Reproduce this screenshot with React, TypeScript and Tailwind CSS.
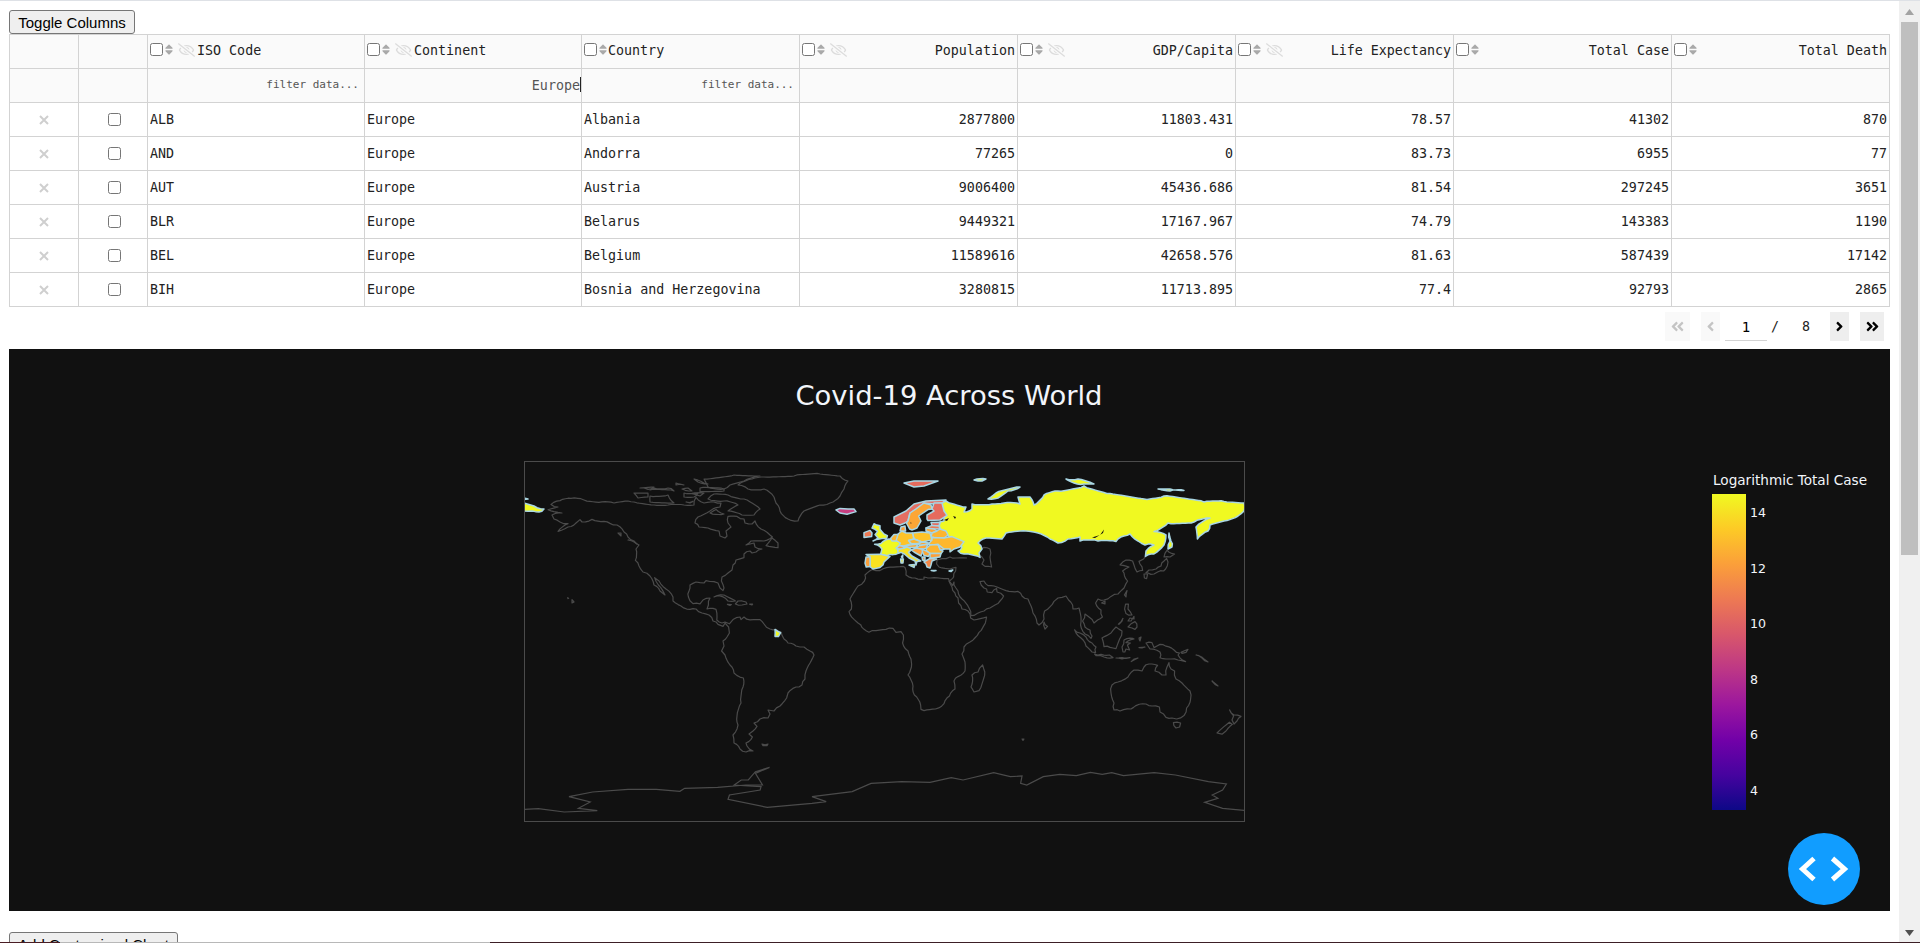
import { FaSort, FaRegEyeSlash, FaAngleDoubleLeft, FaAngleDoubleRight, FaAngleLeft, FaAngleRight } from 'react-icons/fa'

type Columna = { nombre: string; ojo: boolean; numero: boolean }

const columnas: Columna[] = [
  { nombre: 'ISO Code', ojo: true, numero: false },
  { nombre: 'Continent', ojo: true, numero: false },
  { nombre: 'Country', ojo: false, numero: false },
  { nombre: 'Population', ojo: true, numero: true },
  { nombre: 'GDP/Capita', ojo: true, numero: true },
  { nombre: 'Life Expectancy', ojo: true, numero: true },
  { nombre: 'Total Case', ojo: false, numero: true },
  { nombre: 'Total Death', ojo: false, numero: true },
]

const filas = [
  ['ALB', 'Europe', 'Albania', '2877800', '11803.431', '78.57', '41302', '870'],
  ['AND', 'Europe', 'Andorra', '77265', '0', '83.73', '6955', '77'],
  ['AUT', 'Europe', 'Austria', '9006400', '45436.686', '81.54', '297245', '3651'],
  ['BLR', 'Europe', 'Belarus', '9449321', '17167.967', '74.79', '143383', '1190'],
  ['BEL', 'Europe', 'Belgium', '11589616', '42658.576', '81.63', '587439', '17142'],
  ['BIH', 'Europe', 'Bosnia and Herzegovina', '3280815', '11713.895', '77.4', '92793', '2865'],
]

const aPares = (s: string) => s.trim().split(/\s+/).map(p => p.split(',').map(Number))

// lon,lat -> plot pixels (the map frame is 720x360, 2px per degree)
const pt = (s: string) =>
  aPares(s).map(([lon, lat]) => `${515 + (lon + 180) * 2},${112 + (90 - lat) * 2}`).join(' ')

// long straight edges look wrong on a coast, so break them up a little
const rugoso = (s: string, cerrado = true) => {
  const ps = aPares(s)
  const out: string[] = []
  const total = cerrado ? ps.length : ps.length - 1
  for (let i = 0; i < total; i++) {
    const [x0, y0] = ps[i]
    const [x1, y1] = ps[(i + 1) % ps.length]
    const d = Math.hypot(x1 - x0, y1 - y0)
    const n = Math.max(1, Math.floor(d / 1.4))
    for (let k = 0; k < n; k++) {
      const t = k / n
      const r = k === 0 ? 0 : Math.sin(x0 * 12.9898 + y0 * 78.233 + k * 37.7) * 0.45
      out.push(`${x0 + (x1 - x0) * t - ((y1 - y0) / d) * r},${y0 + (y1 - y0) * t + ((x1 - x0) / d) * r}`)
    }
  }
  if (!cerrado) out.push(ps[ps.length - 1].join(','))
  return out.join(' ')
}

// antarctica was read off a zoomed crop, so it has its own mapping
const antartida = '31,508 60,506 115,516 185,512 145,505 170,486 125,470 175,456 250,448 310,448 360,454 370,445 440,442 500,435 535,435 520,400 550,382 520,395 505,420 490,420 475,435 505,438 532,440 530,450 465,465 462,478 545,502 640,490 670,485 640,470 725,455 765,430 830,425 890,427 935,413 960,420 1025,398 1060,410 1085,408 1082,430 1095,435 1130,410 1165,403 1200,407 1230,397 1255,403 1275,398 1300,407 1365,398 1410,405 1480,425 1518,432 1510,450 1488,465 1500,475 1472,487 1510,505 1556,511'
  .split(' ').map(p => {
    const [x, y] = p.split(',').map(Number)
    return `${510 + x / 2.119 - 9},${640 + y / 3 - 349}`
  }).join(' ')

// asia up to the russian border, open line
const asia = '41.5,41.5 36,41.5 33,42 29,41.2 26.5,40.5 26.3,38.5 27.5,37 30.5,36.3 33,36 36,36.8 35.8,35 34.8,32 34.3,31.3 32.6,29.9 34.3,27.8 35,29.5 35,28 37,25 39,21 42.5,16.5 43.4,12.7 45,12.8 50,15 53,16.5 55.5,18 58,20 59.8,22.5 56.5,24.5 56.3,26.3 54,24.2 51.6,24.5 51.3,26 50,26.5 48,29.7 50,30 52,27.7 56.5,27 61,25.2 67,24.8 69,22.5 72,21 72.8,19 74.5,14 76.5,9 77.5,8 80,11 80.3,15 85,19.8 87,21.5 91,22.5 92.3,20.5 94.3,18 94.5,16 97.5,16.5 98.5,12 98.3,8 100.5,3.5 103.5,1.3 104,2.5 103,5.5 100.5,7 99.3,10 100.5,13.5 102.5,12 105,9 106.8,10.5 109.2,12 108.5,15.5 105.8,19 107,21 110,20.5 113.5,22.3 117,23.5 120,26.5 121.8,30 120,34 119.3,35 122.5,37 118,38 121,40.5 124.3,40 125,38 126.5,34.5 129.3,35.3 128,38.5 127.5,39.8 129.8,41 130.7,42.3'

const costas = [
  // americas
  '-156.5,71.3 -150,70.5 -141,69.6 -135,69 -128,70 -125,69.5 -115,68 -108,68 -100,68 -95,68 -94,71.8 -90,69 -85,69.5 -81.5,69 -82,67 -87,65 -93,62 -94.5,59 -92.5,57 -88,56.5 -82.5,55 -82,52.5 -79.5,51.5 -78.5,52.5 -79,55 -76.5,57 -78,59 -78,62.3 -73.5,62.3 -70,61 -69.5,59 -66,58.5 -64.5,60 -61.5,56 -57,53 -55.8,52 -60,50 -66.5,50 -69,48 -65,49 -64.5,47 -61,46 -64,44.5 -66,44 -67,45 -70,43.5 -70,41.7 -74,40.5 -75.5,38 -76,35.5 -78,34 -81,32 -81.3,30 -80,26.5 -80.5,25.2 -82,26.5 -83,29 -85,29.7 -89,30.2 -90,29 -94,29.5 -97,28 -97.5,25 -97.8,22 -95.5,18.7 -92,18.6 -90.5,20.5 -87,21.5 -87.8,18 -88.5,16 -84,15.8 -83.5,12 -83.6,10.5 -81,9 -79.5,9.5 -77.3,8.6 -75.5,10.7 -72,12 -71.5,10.7 -70,12 -67,10.6 -62,10.7 -60,8.5 -57,6 -54,5.8 -51.5,4.5 -50,1 -48,-1 -44,-2.5 -40,-3 -37,-5 -35,-7 -37,-11 -39,-15 -39.5,-19 -41,-22 -44,-23 -48,-26 -48.7,-28.5 -52,-32.5 -55,-35 -58,-34.5 -57,-36.5 -58,-38.5 -62,-39 -65,-41 -63.5,-42.7 -65.5,-45 -67.5,-46.5 -65.8,-48 -69,-51 -68.5,-52.5 -65.5,-55 -69,-55.5 -72,-54 -75,-51 -75.5,-47 -73,-42 -73.5,-37.5 -71.5,-31 -70.5,-23 -70.3,-18.5 -75,-16 -77,-12 -79.5,-7 -81.2,-5 -80,-2.5 -80.5,0 -78.5,2 -77.3,4 -77.7,7 -79.5,8.9 -80.5,7.3 -83,8.3 -85.5,10 -87.5,13 -91,14 -94,16 -97,15.8 -101.5,17.5 -105.5,20 -105.5,22 -109,26 -112.5,30 -114.7,31.7 -112.8,28 -110,24 -109.5,23 -112,25 -115,28 -117,32.5 -120.5,34.5 -122.5,37.5 -124.3,40.3 -124,46 -122.5,48 -125,50 -128,52 -130,54.5 -133.5,58 -137,58.8 -140,59.8 -146,60.8 -151,59.5 -152,60.7 -154,59 -158,57 -163,54.8 -158,58.7 -162,59.5 -165,61 -166,63 -161,64 -165,64.7 -168,65.6 -163,67 -166.5,68.3 -162,70.2',
  // greenland and the canadian islands
  '-73,78 -66,81 -60,82 -45,82.5 -32,83.5 -22,82.5 -18,80 -20,76 -22,72.5 -27,69 -32,68 -40,65 -43,60 -48,61 -52,65 -54,69 -55,72 -60,76 -68,76',
  '-62,66 -65,63 -71,63 -78,65 -73,68 -80,70 -88,71 -85,73.5 -78,73 -70,71',
  '-62,82.5 -75,83 -90,81 -88,77 -80,76 -77,78 -70,80',
  '-105,69 -117,69.5 -117,72.5 -108,73',
  '-123,71.5 -125,74 -118,74 -118,72',
  '-80,75 -92,74.8 -92,76.5 -80,76',
  '-105,75 -117,75.5 -115,76.5 -108,76.5',
  '-95,72 -100,72 -100,74 -93,74',
  '-90,79 -95,81 -93,79.5 -88,78.5',
  '-92,72.5 -96,73.8 -90,74',
  '-96,75 -101,76 -98,76.5',
  '-115,77 -122,76.5 -118,75.8',
  '-100,78 -104,79 -104,78',
  '-97,69 -99,69.5 -95.5,69.8',
  '-80,63.5 -87,64 -84,65.8',
  '-59,47.7 -53,46.7 -53,49 -56,51.5',
  '-128,50.5 -123.5,48.5 -125,49.5',
  '-133,54 -131.5,54 -131.5,52.5',
  '-85,22 -80,23 -75,20.5 -74.3,20 -78,20 -82,22.5',
  '-74.3,18.5 -73,20 -69,19.5 -68.5,18.5 -71,18',
  '-78.3,18.3 -76.3,18.2 -77,17.8',
  '-67.2,18.4 -65.7,18.4 -66,18',
  '-156,19 -155,19.5 -156,20.7',
  '-158.2,21.6 -157.7,21.4 -158,21.2',
  '-61,-51.5 -58,-51.5 -58.5,-52.3 -60.5,-52.3',
  // africa
  '-5.9,35.8 -9.5,33 -9.8,30 -13,27.5 -17,21 -16.3,16 -17.5,14.7 -15,10.8 -13,9 -11,6.8 -7.5,4.4 -4,5.2 1,5.8 4.5,6.3 6,4.3 8.5,4.7 9.7,3 9.3,-1 12,-5 13.5,-9 13.8,-11.5 12,-17 14.5,-22.5 15.2,-27 18.3,-32 18.5,-34.2 20,-34.8 25.7,-34 30,-31.3 32.7,-27.5 35.5,-24 35,-20 37,-17.8 40.5,-15 40.5,-10.5 39,-6.5 40,-3 43,-0.5 47.5,4.3 51,10.5 51.3,12 45,10.5 43.3,11.5 42,15 39,16 37.3,19 37,21.5 35.5,24 34,27 32.6,29.8 32.3,31.2 30,31.2 25,31.7 20,32 20,31 15.5,31.5 11,33 10.5,36.8 9.7,37.3 3,36.9 -2,35.2',
  '49.3,-12 50.4,-15.5 47.5,-24.8 45,-25.5 43.5,-23 44.3,-20 44,-17 47,-15.5',
  '47,45 50,46.8 53,46 53,42 53.8,37 50.5,37.3 49,38.5 50,40.5 47.5,43',
  '130.9,34 132.5,35.5 136,36 138.5,37.5 140,40 141.3,41.3 142,39.5 140.8,36 139.8,35 136.8,34.5 135,33.5 132,34',
  '130,33.5 131.8,33.5 131.3,31.2 130.2,31.5',
  '140,42 141.5,45.4 145.3,43.5 143,42',
  '120.2,23 121.5,25.2 121,22',
  '108.8,19 110.5,20 110.5,18.5',
  '80,9.5 81.8,7.3 80.5,6 79.8,8',
  '120.3,16 120.8,18.5 122.2,18.4 122,16 124,13 121,13.7',
  '122,7 123.5,8.6 125.5,9.7 126.5,7 125.5,5.8 124,6.5',
  '117.2,8.4 119.5,11.3 119,10 117.6,8.4',
  '122,10 123,11.5 125,11 125,12.3 123.5,10',
  '109,1.5 111.5,2.8 113.5,4 116,7 119,5 117.8,1 116,-3.8 113,-3.2 110,-2.8',
  '95.3,5.6 98,4 101,2 104,-1 106,-3 105.8,-5.8 104,-5.5 101,-2.5 98.5,1.5',
  '105.3,-6.5 108.5,-6.7 112.7,-7 114.5,-8.3 110,-8 106,-7.3',
  '119.5,-5.5 119,-3 120,0.5 124.5,1.3 125,1 121,-0.8 123.2,-1 121.7,-2 122.8,-4.5 121,-4 120.4,-5.5',
  '116,-8.5 119,-8.3 123,-8.3 119,-9',
  '123.6,-10.3 127,-8.5 125,-9.5',
  '127.5,1.5 128.5,2 128,0 127.7,0.5',
  '127.5,-3.3 130.5,-3 129,-3.5',
  '131,-1 134,-0.8 135,-3.3 138,-1.7 141,-2.6 145,-4.5 147.8,-6 147,-7 150.8,-10.3 147,-9.5 143.5,-9 141,-9 138,-8.4 138,-5.5 133,-4 132,-2.5',
  '148.5,-5.7 152,-4.2 151,-5.7 149,-6.2',
  '156,-7 160,-9 162,-10.5 159,-8.5',
  // oceania
  '114,-22 113.5,-26 115,-31 115,-34.5 118,-35 123.5,-34 126,-32.3 131,-31.5 134,-32.5 137.7,-33 138,-35.5 141,-38.2 144,-38.5 146.3,-39 150,-37.3 151.3,-33.5 153.3,-29 153,-25 149,-21 146,-19 145.3,-15 143.5,-14 142.5,-10.8 141.5,-13 141,-17 139,-17 135.5,-15 136.8,-12.2 132.5,-11.5 130,-13 129,-15 125,-14.5 122,-18 117,-20.5',
  '144.7,-40.8 148.3,-41 147.8,-43 146,-43.5',
  '172.8,-34.5 175,-37 178.5,-37.7 176.5,-40 175,-41.5 174,-39.5 174.8,-37.5',
  '172.7,-40.6 174.2,-41.7 171,-45 169,-46.6 166.5,-46 171,-42',
  '164,-20 167,-22.5 165.5,-21.7',
  '69,-49 70,-49 69.5,-49.7',
]

// europe and russia with their value on the plasma scale
const paises: [string, string][] = [
  ['#f0f921', '31,70 41,67 40,64.5 44,66 44,68.5 54,68.5 60,69 68,68.5 67,72 73,72 75,68 80,73 87,75 100,77.5 113,73.8 130,71 140,72.5 160,69.5 170,69.8 180,69 180,65 177,62.5 170,60 163,58 162,55 156.7,51 156,57 163,61.5 155,59.5 142,59 135,54.7 141,53 140,48 135,43.5 130.7,42.3 131,45 135,48 130.5,48 127,50 123,53.5 120,52.5 116,49.8 107,50 98,50 98,52 92,51 87,49 83,51 77,54 71,55 61,54 59,51 51,51.5 47,49 49,46 47.5,44 48,41.8 40,43.5 37,45 39,47 35,50 32,52.5 28,56 28,59.5 30,60 30,62 30,65 29,69'],
  ['#f0f921', '-180,69 -175,67.5 -170,66 -172.5,64.5 -176,65 -180,65'],
  ['#f0f921', '-180,71.5 -178,71 -180,70.8'],
  ['#f0f921', '52,71 56,74 68,77 62,75 57,71.5'],
  ['#f0f921', '91,81 97,81 105,78.5 100,78.5 95,79'],
  ['#f0f921', '137,76 143,76 150,75.3 143,75'],
  ['#f0f921', '45,80.5 51,81 49,80'],
  ['#f0f921', '142,46 143,50 142.5,54 143.5,50 144,47'],
  ['#e56b5d', '10,79 15,80 27,80 20,77.5 15,77'],
  ['#e56f62', '5,59 5,62 11,65 15,68.5 21,70 31,70.5 29,69 25,68.5 20,69 16,66 13,64 12,60 10.5,59 8,58'],
  ['#fca636', '11.2,59 12.8,56 14,55.5 16.5,56.5 18.5,60 17.3,62.5 22,65.7 24,66 23.5,68 20,69 16,66 13,64 12,60'],
  ['#e56b5d', '22,60.2 28,60.5 31.5,62.8 30,65 29,69 25,69 24,66 25,65 21.5,63 21.5,61'],
  ['#e56b5d', '23.5,59.2 28,59.4 27.5,57.5 24,57.8'],
  ['#ed7953', '21,56.5 24,57.8 27.5,57.5 28,56 25,56'],
  ['#fca636', '21,56.5 25,56 26.5,55 24,54 21,55'],
  ['#fdb42f', '23.5,52 24,54 26.5,55 28,56 31,55 32,53 30,51.5 25,51.7'],
  ['#fdc328', '14.2,54 19,54.5 23,54 24,50.5 19,49.5 15,51'],
  ['#feb72d', '24,50.5 24,51.7 30,51.5 34,52.2 40,49.7 38,47 35,46 33,44.6 33,46 30,46 28.2,45.5 27,48.3 23,48 22.2,48.5'],
  ['#fdc328', '6,51 7,53.5 9,55 11,54 14.2,54 15,51 12.3,50.3 13.7,48.6 10,47.5 7.6,47.7 8,49 6,49.5'],
  ['#f0f921', '-4.7,48.4 -1.5,48.7 2.5,51 8,49 7.5,47.5 6.5,46.5 7.5,44 3,43.3 1.5,42.6 -1.7,43.4 -1,46'],
  ['#f0f921', '8.7,42 9.4,43 9.3,41.5'],
  ['#f9e221', '-9,43.3 -1.7,43.4 3,42.3 0,39.5 -0.5,38 -2,36.8 -5.5,36 -7,37.2 -7,42'],
  ['#fb9f3a', '-9,42 -7,42 -7,37.2 -8.9,37 -9.5,39'],
  ['#f0f921', '-5.5,50 1.3,51.2 1.7,52.7 0,53.5 -1.5,55.2 -2,56 -2,57.6 -5,58.6 -6,56.5 -3.2,54.8 -4.5,53.2 -3,51.5'],
  ['#ed7953', '-10,51.8 -6.2,52.2 -6,54 -7,55.3 -10,54.2'],
  ['#c73f80', '-24,65.5 -22,64 -18.5,63.4 -14,64.7 -15,66 -18,66 -22,66.3'],
  ['#f7e225', '7,44 7,46 12,47 13.7,45.7 12.3,44.3 14,42.5 18.4,40 16.5,39.8 16,38 15.5,40 12.5,41.5 10.2,43.5 8.5,44.3'],
  ['#f7e225', '12.5,38 15.5,38.2 15,36.8'],
  ['#f7e225', '8.3,41 9.7,41 9.5,39 8.5,39'],
  ['#fb9f3a', '8,55 8.5,57 10.5,57.5 10.8,55'],
  ['#fdb42f', '3.3,51.3 5,53.3 7,53.3 6,50 4,50'],
  ['#fb9f3a', '6,46.3 7.5,47.7 9.7,47.3 10.3,46.5 8,46'],
  ['#fca636', '9.7,47.3 13,48 17,48.5 16,46.8 12.5,46.7'],
  ['#fdb42f', '12.3,50.3 15,51 18.8,49.5 17,48.7 13.7,48.6'],
  ['#fca636', '17,48.5 19,49.5 22.5,49 22,48.4 18,47.8'],
  ['#fca636', '16,46.8 18,47.8 22,48.4 21,46.2 18,45.8'],
  ['#fdb42f', '21,46.2 23,48 27,48.2 28.2,45.5 29.5,45 28.5,43.7 23,43.8 21.5,44.8'],
  ['#fb9f3a', '27,48.3 30,46 28.2,45.5'],
  ['#fb9f3a', '23,43.8 28.5,43.7 28,42 23,41.4'],
  ['#fca636', '19,46 21.5,44.8 23,43.8 22.3,42.3 20,42.8 19.2,44.5'],
  ['#fb9f3a', '13.6,45.5 16,46.5 19,45.9 19.2,44.5 18.5,42.5 15,44.5'],
  ['#f89540', '19,42 20.5,42 20.5,40 19.3,40.5'],
  ['#f48849', '20,39.5 23,41.3 26.3,41 24,40 23.5,38 23,36.5 21.5,37 21,38.5'],
  ['#add8e6', '23.6,35.3 26,35.2 25,35'],
  ['#add8e6', '32.5,35 34.4,35.5 33.5,34.7'],
  ['#f0f921', '-54.5,5.8 -51.7,4.2 -52.8,2.2 -54.5,2.3'],
]

const lagos = ['30,60.5 32.5,61.5 31.5,60', '34.5,62.5 36,62 35.5,61', '13,59.3 14,59 13.3,58.7', '104,51.7 108,53 110,55.7 109.5,54 105.5,51.5']

const plasma = ['#f0f921', '#fdca26', '#fb9f3a', '#ed7953', '#d8576b', '#bd3786', '#9c179e', '#7201a8', '#46039f', '#0d0887']
const ticks: [string, number][] = [['14', 168], ['12', 224], ['10', 279], ['8', 335], ['6', 390], ['4', 446]]

function Encabezado({ col }: { col: Columna }) {
  return (
    <div className={`flex items-center px-[2px] pb-[2px] ${col.numero ? 'justify-between' : col.ojo ? 'gap-[2px]' : ''}`}>
      <span className="flex shrink-0 items-center -mt-[1px]">
        <input type="checkbox" className="block" />
        <FaSort className="ml-[1px] h-[13px] w-[10px] text-[#a9a9a9]" />
        {col.ojo && <FaRegEyeSlash className="ml-[4px] h-[14px] w-[17px] text-[#dcdcdc]" />}
      </span>
      <span className="whitespace-nowrap">{col.nombre}</span>
    </div>
  )
}

function Mapa() {
  return (
    <svg width="1881" height="562" viewBox="0 0 1881 562" className="block">
      <defs>
        <clipPath id="marco"><rect x="515" y="112" width="720" height="360" /></clipPath>
        <linearGradient id="barra" x1="0" y1="0" x2="0" y2="1">
          {plasma.map((c, i) => <stop key={c} offset={i / (plasma.length - 1)} stopColor={c} />)}
        </linearGradient>
      </defs>
      <text x="940" y="56" textAnchor="middle" fill="#f2f5fa" fontSize="27.4" fontFamily="'DejaVu Sans', sans-serif">Covid-19 Across World</text>
      <g clipPath="url(#marco)">
        {costas.map((c, i) => <polygon key={i} points={pt(rugoso(c))} fill="none" stroke="#4b4b4b" strokeWidth="1.2" strokeLinejoin="round" />)}
        <polyline points={pt(rugoso(asia, false))} fill="none" stroke="#4b4b4b" strokeWidth="1.2" strokeLinejoin="round" />
        <polyline points={antartida} fill="none" stroke="#4b4b4b" strokeWidth="1.2" />
        {paises.map(([color, c], i) => (
          <polygon
            key={i}
            points={pt(color === '#f0f921' ? rugoso(c) : c)}
            fill={color}
            stroke="#a9d6e3"
            strokeWidth="1.5"
            strokeLinejoin="round"
          />
        ))}
        {lagos.map((c, i) => <polygon key={i} points={pt(c)} fill="#111111" />)}
      </g>
      <rect x="515.5" y="112.5" width="720" height="360" fill="none" stroke="#4b4b4b" strokeWidth="1" />
      <text x="1704" y="136" fill="#f2f5fa" fontSize="13.6" fontFamily="'DejaVu Sans', sans-serif">Logarithmic Total Case</text>
      <rect x="1703" y="145" width="34" height="316" fill="url(#barra)" />
      {ticks.map(([t, y]) => (
        <text key={t} x="1741" y={y} fill="#f2f5fa" fontSize="12.6" fontFamily="'DejaVu Sans', sans-serif">{t}</text>
      ))}
    </svg>
  )
}

export default function App() {
  return (
    <div className="relative flex h-[943px] w-[1920px] overflow-hidden border-t border-[#dee1e6] bg-white">
      <div className="w-[1899px] shrink-0 pl-[9px]">
        <button className="mt-[9px] block h-[24px] w-[126px] rounded-[3px] border border-[#767676] bg-[#efefef] font-['Liberation_Sans',sans-serif] text-[15px] leading-none text-black">
          Toggle Columns
        </button>

        <table className="w-[1881px] table-fixed border-collapse font-['DejaVu_Sans_Mono',monospace] text-[13.33px] text-[#222]">
          <colgroup>
            <col className="w-[69px]" />
            <col className="w-[69px]" />
            <col className="w-[217px]" />
            <col className="w-[217px]" />
            <col className="w-[218px]" />
            <col className="w-[218px]" />
            <col className="w-[218px]" />
            <col className="w-[218px]" />
            <col className="w-[218px]" />
            <col className="w-[218px]" />
          </colgroup>
          <thead>
            <tr className="h-[34px] bg-[#fafafa]">
              <th className="border border-[#d3d3d3]" />
              <th className="border border-[#d3d3d3]" />
              {columnas.map(col => (
                <th key={col.nombre} className="border border-[#d3d3d3] p-0 font-normal">
                  <Encabezado col={col} />
                </th>
              ))}
            </tr>
            <tr className="h-[34px] bg-[#fafafa]">
              <th className="border border-[#d3d3d3]" />
              <th className="border border-[#d3d3d3]" />
              <th className="border border-[#d3d3d3] pr-[5px] text-right text-[11px] font-normal text-[#555]">filter data...</th>
              <th className="border border-[#d3d3d3] p-0 pr-[1px] text-right font-normal text-[#555]">
                <span className="relative">
                  Europe
                  <span className="absolute -right-[1px] -top-[1px] h-[15px] w-px bg-[#222]" />
                </span>
              </th>
              <th className="border border-[#d3d3d3] pr-[5px] text-right text-[11px] font-normal text-[#555]">filter data...</th>
              <th className="border border-[#d3d3d3]" />
              <th className="border border-[#d3d3d3]" />
              <th className="border border-[#d3d3d3]" />
              <th className="border border-[#d3d3d3]" />
              <th className="border border-[#d3d3d3]" />
            </tr>
          </thead>
          <tbody>
            {filas.map(fila => (
              <tr key={fila[0]} className="h-[34px]">
                <td className="border border-[#d3d3d3] p-0">
                  <svg width="10" height="10" viewBox="0 0 10 10" className="mx-auto block">
                    <path d="M1 1L9 9M9 1L1 9" stroke="#cfcfcf" strokeWidth="2" />
                  </svg>
                </td>
                <td className="border border-[#d3d3d3] p-0 pl-[2px]">
                  <input type="checkbox" className="mx-auto block" />
                </td>
                {fila.map((valor, i) => (
                  <td
                    key={i}
                    className={`whitespace-nowrap border border-[#d3d3d3] px-[2px] py-0 ${columnas[i].numero ? 'text-right' : 'text-left'}`}
                  >
                    {valor}
                  </td>
                ))}
              </tr>
            ))}
          </tbody>
        </table>

        {/* Paginacion */}
        <div className="flex h-[42px] w-[1881px] items-start justify-end pt-[5px] pr-[6px] font-['DejaVu_Sans_Mono',monospace] text-[13.33px] text-[#222]">
          <span className="flex h-[29px] w-[25px] items-center justify-center bg-[#f9f9f9] text-[#c4c4c4]"><FaAngleDoubleLeft size={15} /></span>
          <span className="ml-[11px] flex h-[29px] w-[19px] items-center justify-center bg-[#f9f9f9] text-[#c4c4c4]"><FaAngleLeft size={15} /></span>
          <span className="ml-[5px] flex h-[29px] w-[42px] items-center justify-center border-b border-[#d3d3d3] pt-[3px] text-[14px] text-black">1</span>
          <span className="ml-[4px] flex h-[29px] w-[8px] items-center justify-center">/</span>
          <span className="ml-[22px] flex h-[29px] w-[10px] items-center justify-center">8</span>
          <span className="ml-[19px] flex h-[29px] w-[19px] items-center justify-center bg-[#eeeeee] text-black"><FaAngleRight size={15} /></span>
          <span className="ml-[11px] flex h-[29px] w-[24px] items-center justify-center bg-[#eeeeee] text-black"><FaAngleDoubleRight size={15} /></span>
        </div>

        <div className="relative h-[562px] w-[1881px] bg-[#111111]">
          <Mapa />
          <div className="absolute right-[30px] bottom-[6px] flex h-[72px] w-[72px] items-center justify-center rounded-full bg-[#119dff]">
            <svg width="72" height="72" viewBox="0 0 72 72">
              <path d="M26 25.5L14.5 36L26 46.5M44.5 25.5L56.5 36L44.5 46.5" fill="none" stroke="#ffffff" strokeWidth="5" />
            </svg>
          </div>
        </div>

        <button className="mt-[21px] block h-[24px] w-[169px] rounded-[3px] border border-[#767676] bg-[#efefef] font-['Liberation_Sans',sans-serif] text-[15px] leading-none text-black">
          Add Customized Chart
        </button>
      </div>

      {/* Barra de scroll */}
      <div className="flex w-[21px] shrink-0 flex-col items-center bg-[#f0f0f0]">
        <div className="flex h-[21px] w-full items-center justify-center">
          <svg width="9" height="6" viewBox="0 0 9 6"><path d="M4.5 0L9 6H0Z" fill="#a3a3a3" /></svg>
        </div>
        <div className="h-[533px] w-[17px] bg-[#bfbfbf]" />
        <div className="flex-1" />
        <div className="flex h-[21px] w-full items-center justify-center">
          <svg width="9" height="6" viewBox="0 0 9 6"><path d="M0 0H9L4.5 6Z" fill="#505050" /></svg>
        </div>
      </div>

      <div className="absolute inset-x-0 bottom-0 flex h-px">
        <div className="w-[60px] bg-[#4a1d24]" />
        <div className="w-[430px] bg-[#b8b8b8]" />
        <div className="flex-1 bg-[#3c1f26]" />
      </div>
    </div>
  )
}
